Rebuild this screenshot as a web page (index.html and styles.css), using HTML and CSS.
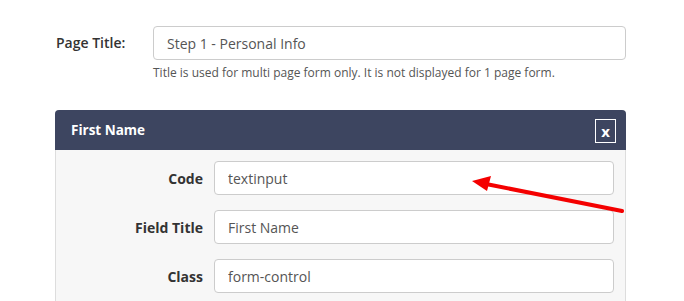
FILE: index.html
```html
<!DOCTYPE html>
<html lang="en">
<head>
  <meta charset="UTF-8">
  <title>Form Builder</title>
  <link rel="stylesheet" href="styles.css">
</head>
<body>
  <div class="page">
    <div class="title-row">
      <label class="title-label">Page Title:</label>
      <div class="title-field">
        <input class="input" type="text" value="Step 1 - Personal Info">
        <div class="help">Title is used for multi page form only. It is not displayed for 1 page form.</div>
      </div>
    </div>

    <div class="panel">
      <div class="panel-head">
        <span>First Name</span>
        <button class="close">x</button>
      </div>
      <div class="panel-body">
        <div class="row">
          <label>Code</label>
          <input class="input" type="text" value="textinput">
        </div>
        <div class="row">
          <label>Field Title</label>
          <input class="input" type="text" value="First Name">
        </div>
        <div class="row">
          <label>Class</label>
          <input class="input" type="text" value="form-control">
        </div>
      </div>
    </div>
  </div>

  <svg class="arrow" width="684" height="301" viewBox="0 0 684 301">
    <line x1="622" y1="211" x2="486" y2="184" stroke="#f40000" stroke-width="4" stroke-linecap="round"/>
    <polygon points="472,181 491,176 487,191" fill="#f40000"/>
  </svg>
</body>
</html>
```

FILE: styles.css
```css
html, body {
  margin: 0;
  padding: 0;
  background: white;
  font-family: "Open Sans", Arial, sans-serif;
  color: #333;
  overflow: hidden;
}
.page {
  padding: 26px 0 0 55px;
  width: 571px;
}
.title-row {
  display: flex;
}
.title-label {
  width: 97px;
  font-size: 14px;
  font-weight: 600;
  line-height: 34px;
  padding-left: 1px;
}
.title-field {
  flex: 1;
}
.input {
  display: block;
  box-sizing: border-box;
  width: 100%;
  height: 34px;
  padding: 0 13px;
  border: 1px solid #ccc;
  border-radius: 4px;
  background: white;
  font-family: "Open Sans", Arial, sans-serif;
  font-size: 14px;
  color: #555;
}
.help {
  font-size: 12px;
  color: #555;
  margin-top: 4px;
  line-height: 17px;
}
.panel {
  margin-top: 29px;
  border: 1px solid #ddd;
  border-radius: 4px 4px 0 0;
  background: #f7f7f7;
}
.panel-head {
  background: #3d4560;
  color: white;
  font-size: 13.5px;
  font-weight: 700;
  height: 40px;
  margin: -1px -1px 0 -1px;
  border-radius: 4px 4px 0 0;
  display: flex;
  align-items: center;
  justify-content: space-between;
  padding: 0 10px 0 16px;
}
.close {
  width: 21px;
  height: 24px;
  margin-top: 2px;
  padding: 0;
  background: transparent;
  border: 1px solid white;
  color: white;
  font-family: "Open Sans", Arial, sans-serif;
  font-weight: 700;
  font-size: 15px;
  line-height: 19px;
}
.panel-body {
  padding: 11px 11px 10px 0;
  display: flex;
  flex-direction: column;
  gap: 15px;
}
.row {
  display: flex;
  align-items: center;
  gap: 11px;
}
.row label {
  width: 147px;
  text-align: right;
  font-size: 14px;
  font-weight: 700;
}
.row .input {
  flex: 1;
}
.arrow {
  position: absolute;
  left: 0;
  top: 0;
  pointer-events: none;
}
```
